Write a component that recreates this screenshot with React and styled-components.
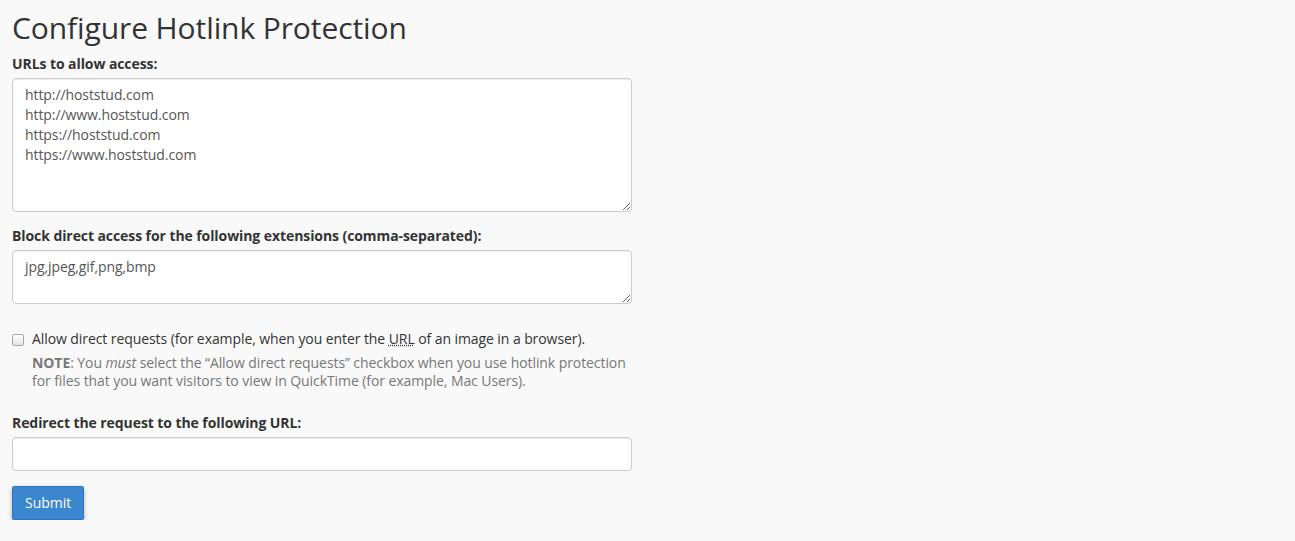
import React from 'react';
import styled, { createGlobalStyle } from 'styled-components';

const GlobalStyle = createGlobalStyle`
  html, body {
    margin: 0;
    padding: 0;
    background: #f9f9f9;
  }
  body {
    font-family: "Open Sans", "Liberation Sans", sans-serif;
    font-size: 14px;
    line-height: 20px;
    letter-spacing: -0.08px;
    color: #333;
  }
`;

const Page = styled.div`
  padding: 0 12px;
  width: 620px;
`;

const Title = styled.h1`
  font-size: 30px;
  font-weight: 400;
  line-height: 36px;
  letter-spacing: -0.1px;
  margin: 10px 0 8px;
  color: #333;
`;

const Group = styled.div`
  margin-bottom: ${(p) => p.$gap || '15px'};
`;

const Label = styled.label`
  display: block;
  font-weight: 700;
  font-size: 14px;
  line-height: 20px;
  margin-bottom: 4px;
`;

const TextArea = styled.textarea`
  display: block;
  box-sizing: border-box;
  width: 100%;
  height: ${(p) => p.$height}px;
  padding: 6px 12px;
  font-family: inherit;
  font-size: 14px;
  line-height: 20px;
  letter-spacing: inherit;
  color: #555;
  background: #fff;
  border: 1px solid #ccc;
  border-radius: 4px;
  box-shadow: inset 0 1px 1px rgba(0, 0, 0, 0.075);
  resize: vertical;
  margin: 0;
`;

const Input = styled.input`
  display: block;
  box-sizing: border-box;
  width: 100%;
  height: 34px;
  padding: 6px 12px;
  font-family: inherit;
  font-size: 14px;
  color: #555;
  background: #fff;
  border: 1px solid #ccc;
  border-radius: 4px;
  box-shadow: inset 0 1px 1px rgba(0, 0, 0, 0.075);
  margin: 0;
`;

const CheckRow = styled.label`
  display: flex;
  align-items: flex-start;
  gap: 8px;
  font-weight: 400;
  margin-top: 25px;
`;

const Box = styled.input`
  appearance: none;
  box-sizing: border-box;
  width: 12px;
  height: 12px;
  margin: 5px 0 0;
  flex: none;
  border: 1px solid #a6a6a6;
  border-radius: 2px;
  background: linear-gradient(#ffffff, #e4e4e4);
`;

const Abbr = styled.abbr`
  text-decoration: underline dotted;
  cursor: help;
`;

const Note = styled.p`
  margin: 5px 0 0 20px;
  color: #777;
  line-height: 18px;
  b {
    font-weight: 700;
  }
`;

const Button = styled.button`
  font-family: inherit;
  font-size: 14px;
  line-height: 20px;
  color: #fff;
  background: #3a87cf;
  border: 1px solid #2f77bd;
  border-radius: 2px;
  padding: 6px 12px;
  box-shadow: 0 2px 5px rgba(0, 0, 0, 0.3);
  cursor: pointer;
`;

export default function App() {
  return (
    <Page>
      <GlobalStyle />
      <Title>Configure Hotlink Protection</Title>
      <Group $gap="14px">
        <Label>URLs to allow access:</Label>
        <TextArea
          $height={134}
          defaultValue={'http://hoststud.com\nhttp://www.hoststud.com\nhttps://hoststud.com\nhttps://www.hoststud.com'}
        />
      </Group>
      <Group $gap="0">
        <Label>Block direct access for the following extensions (comma-separated):</Label>
        <TextArea $height={54} defaultValue="jpg,jpeg,gif,png,bmp" />
      </Group>
      <Group $gap="23px">
        <CheckRow>
          <Box type="checkbox" />
          <span>
            Allow direct requests (for example, when you enter the <Abbr title="Uniform Resource Locator">URL</Abbr> of an image in a browser).
          </span>
        </CheckRow>
        <Note>
          <b>NOTE</b>: You <i>must</i> select the “Allow direct requests” checkbox when you use hotlink protection for files that you want visitors to view in QuickTime (for example, Mac Users).
        </Note>
      </Group>
      <Group>
        <Label>Redirect the request to the following URL:</Label>
        <Input type="text" />
      </Group>
      <Button>Submit</Button>
    </Page>
  );
}
